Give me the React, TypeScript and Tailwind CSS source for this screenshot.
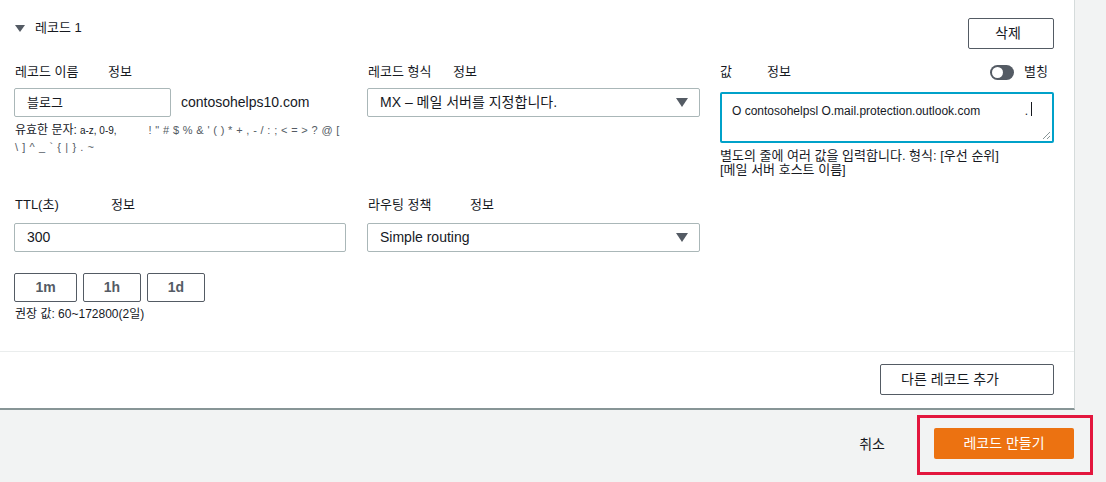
import React from 'react';

const Caret = () => (
  <svg width="12" height="9" viewBox="0 0 12 9" className="shrink-0">
    <polygon points="0,0 12,0 6,9" fill="#545b64" />
  </svg>
);

const Label = ({ text, w }: { text: string; w: string }) => (
  <div className="flex items-center h-[20px] text-[13px] text-[#16191f]">
    <span className={w}>{text}</span>
    <span>정보</span>
  </div>
);

const Select = ({ value }: { value: string }) => (
  <div className="flex items-center justify-between h-[29px] border border-[#aab7b8] rounded-[2px] pl-[12px] pr-[11px] text-[14px]">
    <span>{value}</span>
    <Caret />
  </div>
);

const App = () => {
  return (
    <div className="w-[1106px] h-[482px] overflow-hidden bg-[#f2f3f3] text-[#16191f] font-['Liberation_Sans','Noto_Sans_CJK_KR',sans-serif]">
      <div className="w-[1075px] bg-white border-r border-[#d5dbdb] border-b-2 border-b-[#879596]">
        {/* Record section */}
        <div className="h-[351px] pl-[14px] pr-[20px] pt-[18px]">
          <div className="flex justify-between items-start h-[31px]">
            <div className="flex items-center gap-[10px] pl-[1px] h-[20px] text-[13px]">
              <svg width="10" height="7" viewBox="0 0 10 7">
                <polygon points="0,0 10,0 5,7" fill="#545b64" />
              </svg>
              <span>레코드 1</span>
            </div>
            <button className="w-[86px] h-[31px] border border-[#545b64] rounded-[2px] text-[14px] pr-[6px]">
              삭제
            </button>
          </div>

          <div className="mt-[13px] h-[133px] grid grid-cols-[333px_333px_334px] gap-x-[20px]">
            {/* Name */}
            <div>
              <div className="pl-[1px]">
                <Label text="레코드 이름" w="w-[93px]" />
              </div>
              <div className="mt-[6px] flex items-center">
                <div className="w-[157px] h-[29px] border border-[#aab7b8] rounded-[2px] pl-[12px] flex items-center text-[13px]">
                  블로그
                </div>
                <span className="ml-[10px] text-[14px]">contosohelps10.com</span>
              </div>
              <div className="mt-[5px] pl-[1px] text-[12px] leading-[16px] whitespace-nowrap">
                <div className="flex items-baseline">
                  <span>유효한 문자:</span>
                  <span className="ml-[3px] text-[10px]">a-z, 0-9,</span>
                  <span className="ml-[32px] text-[11px] text-[#545b64] tracking-[0.35px]">
                    ! " # $ % &amp; ' ( ) * + , - / : ; &lt; = &gt; ? @ [
                  </span>
                </div>
                <div className="text-[11px] text-[#545b64] tracking-[0.6px]">{'\\ ] ^ _ ` { | } . ~'}</div>
              </div>
            </div>

            {/* Type */}
            <div>
              <div className="pl-[1px]">
                <Label text="레코드 형식" w="w-[85px]" />
              </div>
              <div className="mt-[6px]">
                <Select value="MX – 메일 서버를 지정합니다." />
              </div>
            </div>

            {/* Value */}
            <div>
              <div className="flex items-center justify-between h-[20px]">
                <Label text="값" w="w-[47px]" />
                <div className="flex items-center gap-[10px] text-[13px] pr-[6px]">
                  <div className="w-[24px] h-[15px] rounded-full bg-[#545b64] flex items-center pl-[2px]">
                    <div className="w-[11px] h-[11px] rounded-full bg-white" />
                  </div>
                  <span>별칭</span>
                </div>
              </div>
              <div className="mt-[10px] relative h-[51px] border-2 border-[#00a1c9] rounded-[2px] pl-[10px] pr-[20px] pt-[8px] flex justify-between text-[12px]">
                <span>O contosohelpsl O.mail.protection.outlook.com</span>
                <span className="flex items-start">
                  <span>.</span>
                  <span className="ml-[3px] w-[1px] h-[14px] bg-[#16191f]" />
                </span>
                <svg width="10" height="10" viewBox="0 0 10 10" className="absolute right-[1px] bottom-[1px]">
                  <line x1="9" y1="2" x2="2" y2="9" stroke="#879596" strokeWidth="1" />
                  <line x1="9" y1="6" x2="6" y2="9" stroke="#879596" strokeWidth="1" />
                </svg>
              </div>
              <div className="mt-[6px] text-[13px] leading-[14px] whitespace-nowrap">
                <div>별도의 줄에 여러 값을 입력합니다. 형식: [우선 순위]</div>
                <div>[메일 서버 호스트 이름]</div>
              </div>
            </div>
          </div>

          <div className="grid grid-cols-[333px_333px_334px] gap-x-[20px]">
            {/* TTL */}
            <div>
              <div className="pl-[1px] flex items-center h-[20px] text-[13px]">
                <span className="w-[96px]">TTL(초)</span>
                <span>정보</span>
              </div>
              <div className="mt-[8px] w-[332px] h-[29px] border border-[#aab7b8] rounded-[2px] pl-[12px] flex items-center text-[14px]">
                300
              </div>
              <div className="mt-[21px] flex gap-[6px]">
                <button className="w-[63px] h-[29px] border border-[#545b64] rounded-[2px] text-[14px] font-bold text-[#545b64]">1m</button>
                <button className="w-[58px] h-[29px] border border-[#545b64] rounded-[2px] text-[14px] font-bold text-[#545b64]">1h</button>
                <button className="w-[58px] h-[29px] border border-[#545b64] rounded-[2px] text-[14px] font-bold text-[#545b64]">1d</button>
              </div>
              <div className="mt-[5px] pl-[1px] text-[12px] leading-[14px]">권장 값: 60~172800(2일)</div>
            </div>

            {/* Routing */}
            <div>
              <div className="pl-[1px]">
                <Label text="라우팅 정책" w="w-[102px]" />
              </div>
              <div className="mt-[8px]">
                <Select value="Simple routing" />
              </div>
            </div>
            <div />
          </div>
        </div>

        {/* Add record */}
        <div className="border-t border-[#eaeded] flex justify-end pr-[20px] pt-[12px] pb-[13px]">
          <button className="w-[174px] h-[31px] border border-[#545b64] rounded-[2px] text-[14px] text-left pl-[20px]">
            다른 레코드 추가
          </button>
        </div>
      </div>

      {/* Footer */}
      <div className="flex justify-end items-start pr-[13px] pt-[5px]">
        <span className="mt-[19px] text-[14px]">취소</span>
        <div className="ml-[32px] w-[176px] h-[60px] border-[3px] border-[#e3173e] pl-[14px] pt-[10px]">
          <button className="w-[140px] h-[31px] bg-[#ec7211] rounded-[2px] text-white text-[14px]">
            레코드 만들기
          </button>
        </div>
      </div>
    </div>
  );
};

export default App;
